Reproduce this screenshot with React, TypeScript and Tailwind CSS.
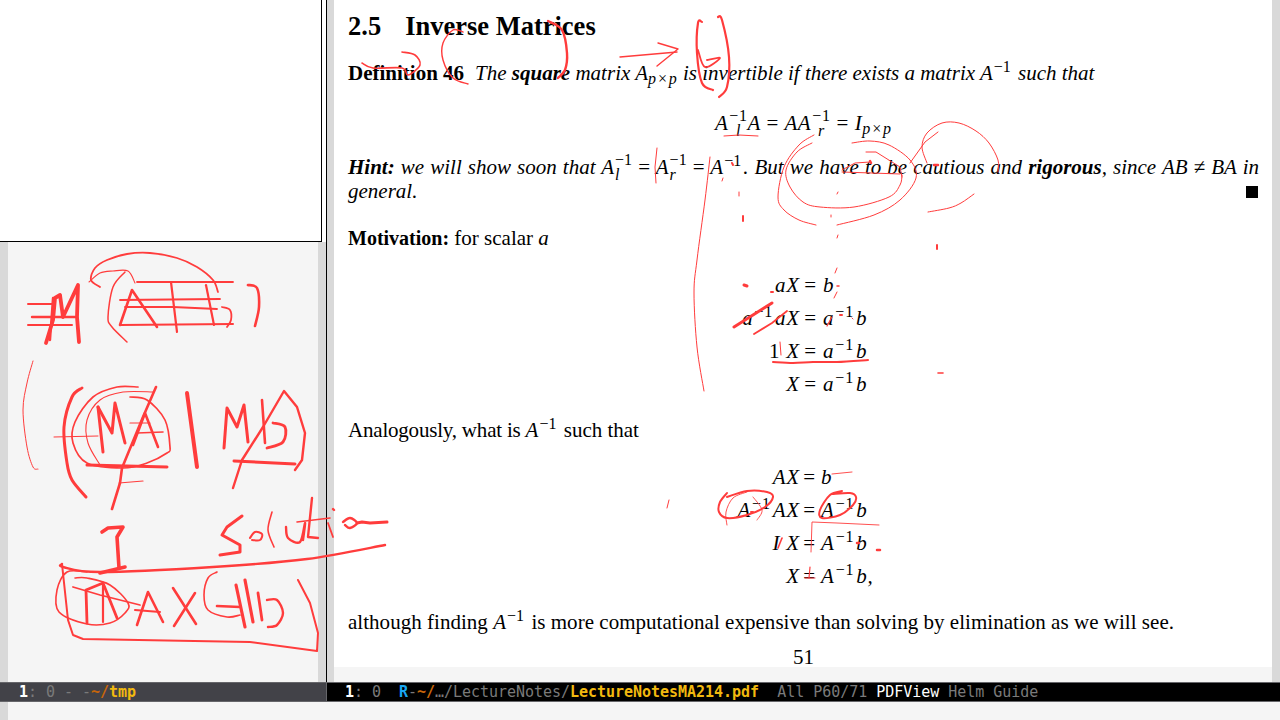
const F = "[font-family:'Liberation_Serif',serif]";
type S = [string, number, boolean?];
const strokes: S[] = [
  // left panel: #M ( A | b )
  ["100,287 91,280 95,268 107,260 127,254 150,253 177,258 197,267 213,280 218,292", 1.8, true],
  ["89,282 100,273 113,271 128,271 135,283", 1.1, true],
  ["125,272 113,287 108,317 112,327 127,342", 1.5, true],
  ["137,282 233,282", 1.8],
  ["120,300 220,299", 1.8],
  ["125,307 173,307 217,309", 1.8],
  ["120,325 233,324", 2],
  ["120,325 132,290 157,327", 2.6],
  ["171,282 177,332", 2.2],
  ["206,285 214,325", 2.2],
  ["222,307 230,310 231,320 227,327", 1.8, true],
  ["248,285 257,288 259,307 255,326", 2.6, true],
  ["28,304 55,304", 2],
  ["32,317 75,317", 2.4],
  ["28,325 72,325", 2],
  ["46,343 53,320 55,298 60,295 63,317 78,285 77,317 79,342", 3.8],
  ["50,340 53,298", 2.4],
  ["33,361 27,383 23,410 27,447 33,467 38,469", 1, true],
  // ( MA | Mb )
  ["82,388 72,397 64,427 67,463 72,480 86,497", 3, true],
  ["138,387 117,387 93,397 75,422 73,443 87,463 123,468 147,463 167,453 170,447 165,420 147,400 130,397", 1.7, true],
  ["153,392 123,392 100,400 87,420 88,443 100,465", 1.1, true],
  ["87,465 167,467", 3],
  ["98,407 103,452", 3],
  ["98,407 112,433 115,403 125,443", 3],
  ["156,387 143,417 122,468 120,483 112,509", 2.6],
  ["133,445 145,413 158,447", 2.6],
  ["130,423 150,423", 1.2],
  ["137,433 163,432", 1.6],
  ["54,437 98,436", 1],
  ["187,393 197,467", 4],
  ["224,448 227,408 237,427 244,405 248,442", 3],
  ["262,400 265,443", 2.6],
  ["267,448 283,442 285,427 273,423", 2.8, true],
  ["233,488 242,460 263,427 284,391 297,407 305,433 302,460 295,470", 2.4],
  ["234,461 295,464", 3],
  ["119,483 143,481", 1.2],
  // I and solution
  ["102,532 108,528 123,527 117,537 119,568", 3.6],
  ["100,573 125,567", 3.6],
  ["242,516 227,527 222,535 240,545 240,552 220,555", 3],
  ["250,538 255,532 262,534 260,540 252,540", 2, true],
  ["272,512 268,530 274,547", 1.6, true],
  ["286,527 288,538 300,542 305,523 303,540", 2.4, true],
  ["312,498 308,537 318,538", 2.4],
  ["297,522 330,518", 1.6],
  ["328,523 333,537", 1.8],
  ["333,509 334,510", 2.4],
  ["343,522 350,518 357,523 350,528 345,525", 2.4, true],
  ["357,523 362,522 370,523 387,522", 3],
  // underline + box
  ["62,564 63,567 100,572 213,567 307,559 385,545", 2.4, true],
  ["62,564 68,620 73,635 83,639 250,642 317,651 318,633 310,603 298,580", 2],
  ["87,572 67,572 57,590 59,612 87,624 110,623 125,613 128,603 110,585 87,578 75,578", 1.6, true],
  ["73,587 100,595 140,605", 1.8],
  ["87,623 86,590 103,583 117,618", 2.8],
  ["103,583 103,622", 2.2],
  ["137,625 148,592 163,622", 2.6],
  ["135,610 160,612", 2],
  ["173,588 196,624", 2.6],
  ["195,593 174,626", 2.6],
  ["217,572 208,578 204,595 208,610 227,617 240,615", 1.6, true],
  ["217,606 240,607", 2.6],
  ["236,585 245,627", 3.2],
  ["245,580 253,622", 3.2],
  ["258,593 262,620", 2.8],
  ["267,600 277,600 283,613 277,625 268,627", 2.4, true],
  // top of page
  ["362,63 373,68 402,68 408,75 420,65 415,55 402,52", 1.6, true],
  ["463,32 453,30 443,43 443,60 453,78 468,84", 1.4, true],
  ["548,21 562,30 567,53 565,70 558,78", 2.4, true],
  ["620,57 677,52", 1.4],
  ["658,43 678,49 657,66", 1.4],
  ["702,22 698,23 697,53 702,83 713,90", 2.2, true],
  ["718,17 722,20 729,57 727,87 719,97", 2.2, true],
  ["698,50 705,67 720,58 707,60", 1.8, true],
  ["724,136 739,135 758,136", 1],
  ["657,148 655,167 656,183", 1],
  ["710,157 705,200 697,260 694,293 697,347 704,391", 1, true],
  // circles by "But we have"
  ["814,135 799,145 784,167 778,197 784,210 799,220 816,225", 1, true],
  ["812,143 797,152 786,170 790,187 803,202 820,207 854,207 889,197 900,185 902,175", 1, true],
  ["837,225 874,215 900,200 916,178 910,160 889,145 870,141 852,143", 1, true],
  ["866,152 876,152 900,167 902,177", 1],
  ["842,170 855,163 870,162", 1],
  ["842,172 900,174", 1],
  ["910,163 925,142 938,132", 1],
  ["927,163 922,147 927,133 942,123 959,123 976,131 989,143 998,160 998,172", 1, true],
  ["928,212 949,208 961,203 974,194", 1, true],
  ["743,216 743,221", 2],
  ["739,192 739,196", 1],
  ["723,178 722,181", 1],
  ["937,245 937,249", 2],
  ["732,163 733,165", 2],
  ["870,161 871,163", 2.5],
  ["934,165 938,165", 2.5],
  ["838,192 837,194", 1],
  ["831,215 831,217", 1],
  ["838,235 837,238", 1],
  // a^{-1}
  ["744,285 747,286", 3],
  ["771,292 773,292", 2],
  ["837,286 839,286", 1.5],
  ["837,268 835,273", 1],
  ["837,292 834,298", 1],
  ["734,327 772,303", 3],
  ["754,334 772,323 787,311", 1.8],
  ["827,326 832,317", 1.2],
  ["840,315 842,315", 2],
  ["852,318 853,319", 1],
  ["780,342 781,355", 1],
  ["773,362 793,363 813,362 837,362 868,360", 2, true],
  ["938,373 943,373", 1.6],
  // A^{-1}
  ["832,474 852,472", 0.9],
  ["667,508 669,500", 1],
  ["727,493 720,502 719,512 727,518 747,515 765,507 773,497 767,492 747,491 727,497", 2, true],
  ["727,525 726,512 733,498 747,492", 0.9, true],
  ["757,520 762,510 753,497", 0.9, true],
  ["842,491 830,495 820,510 822,518 840,515 853,505 856,497 850,493 832,494", 2, true],
  ["811,552 812,522 837,523 879,525", 0.9],
  ["778,548 782,538", 1.6],
  ["857,543 859,543", 2.5],
  ["877,550 880,550", 2.5],
  ["810,567 809,578", 1.2],
  ["805,578 815,578", 1],
  ["751,512 753,512", 2],
];

function strokePath(p: string, smooth?: boolean) {
  const pts = p.split(" ").map((q) => q.split(",").map(Number));
  if (!smooth) return "M" + pts.map((q) => q.join(" ")).join("L");
  let d = `M${pts[0][0]} ${pts[0][1]}`;
  for (let i = 0; i < pts.length - 1; i++) {
    const a = pts[Math.max(i - 1, 0)];
    const b = pts[i];
    const c = pts[i + 1];
    const e = pts[Math.min(i + 2, pts.length - 1)];
    d += `C${b[0] + (c[0] - a[0]) / 6} ${b[1] + (c[1] - a[1]) / 6} ${c[0] - (e[0] - b[0]) / 6} ${c[1] - (e[1] - b[1]) / 6} ${c[0]} ${c[1]}`;
  }
  return d;
}

function Sup({ t = "−1" }: { t?: string }) {
  return <sup className="ml-[1px] mr-[2px] not-italic text-[16px]">{t}</sup>;
}

function SubSup({ s }: { s: string }) {
  return (
    <span className="ml-[1px] inline-flex flex-col align-[9px] text-[16px] leading-[15px]">
      <span className="not-italic">−1</span>
      <span>{s}</span>
    </span>
  );
}

function Sub({ t }: { t: string }) {
  return <sub className="text-[16px] tracking-[1px]">{t}</sub>;
}

function Eq({ l, r, lhs = "grid-cols-[452px_21px_1fr]" }: { l: React.ReactNode; r: React.ReactNode; lhs?: string }) {
  return (
    <div className={`grid h-[26px] ${lhs} whitespace-nowrap leading-[26px] italic tracking-[0.8px]`}>
      <div className="text-right">{l}</div>
      <div className="text-center not-italic">=</div>
      <div className="pl-[2px]">{r}</div>
    </div>
  );
}

function Mode({ dark }: { dark?: boolean }) {
  const g = "text-[#7a7a7a]";
  const y = "font-bold text-[#f2b90f]";
  const o = "font-bold text-[#c8660a]";
  const w = "font-bold text-white";
  if (!dark)
    return (
      <div className="flex h-[20px] w-[327px] items-center overflow-hidden whitespace-pre border-y border-r border-[#66666a] bg-[#424248] pl-[1px] font-['DejaVu_Sans_Mono',monospace] text-[15px] leading-[18px] tracking-[-0.03px]">
        <span className={w}>{"  1"}</span>
        <span className={g}>: 0 - -</span>
        <span className={o}>~/</span>
        <span className={y}>tmp</span>
      </div>
    );
  return (
    <div className="flex h-[20px] flex-1 items-center overflow-hidden whitespace-pre border-y border-[#66666a] bg-black font-['DejaVu_Sans_Mono',monospace] text-[15px] leading-[18px] tracking-[-0.03px]">
      <span className={w}>{"  1"}</span>
      <span className={g}>: 0  </span>
      <span className="font-bold text-[#19a6f2]">R</span>
      <span className={g}>-</span>
      <span className={o}>~/</span>
      <span className={g}>…/LectureNotes/</span>
      <span className={y}>LectureNotesMA214.pdf</span>
      <span className={g}>  All P60/71 </span>
      <span className="text-white">PDFView</span>
      <span className={g}> Helm Guide</span>
    </div>
  );
}

const C2 = "grid-cols-[452px_19px_1fr]";

export default function App() {
  return (
    <div className={`relative flex h-[720px] w-[1280px] flex-col overflow-hidden bg-[#f5f5f5] text-black ${F} text-[21px]`}>
      <div className="flex h-[682px]">
        {/* left window */}
        <div className="flex w-[326px] flex-col">
          <div className="flex h-[242px]">
            <div className="h-[241.5px] w-[322px] border-r border-b border-black bg-white" />
            <div className="w-[4px] bg-white" />
          </div>
          <div className="flex flex-1">
            <div className="w-[8px] bg-[#d9d9d9]" />
            <div className="flex-1 bg-[#f5f5f5]" />
            <div className="w-[8px] bg-[#d9d9d9]" />
          </div>
        </div>
        <div className="w-[1px] bg-black" />
        {/* right window */}
        <div className="flex flex-1">
          <div className="w-[7px] bg-[#d9d9d9]" />
          <div className="flex flex-1 flex-col">
            <div className="flex h-[667px] flex-col bg-white pr-[13px] pl-[14px] pt-[13px]">
              <div className="h-[26px] whitespace-pre text-[26.5px] font-bold leading-[26px]">
                2.5<span className="ml-[24px]">Inverse Matrices</span>
              </div>
              <div className="mt-[21px] h-[26px] whitespace-nowrap leading-[26px]">
                <b>Definition 46</b>
                <span className="ml-[11px] italic">
                  The <b>square</b> matrix A<Sub t="p×p" /> is invertible if there exists a matrix A<Sup /> such that
                </span>
              </div>
              <div className="mt-[22px] h-[26px] whitespace-nowrap text-center italic leading-[26px] tracking-[0.6px]">
                A<SubSup s="l" />A <span className="not-italic">=</span> AA<SubSup s="r" /> <span className="not-italic">=</span> I<Sub t="p×p" />
              </div>
              <div className="mt-[18px] h-[26px] whitespace-nowrap italic leading-[26px] [text-align-last:justify]">
                <b>Hint:</b> we will show soon that A<SubSup s="l" /> <span className="not-italic">=</span> A<SubSup s="r" /> <span className="not-italic">=</span> A<Sup />. But we have to be cautious and <b>rigorous</b>, since AB <span className="not-italic">≠</span> BA in
              </div>
              <div className="flex h-[26px] items-center justify-between italic leading-[26px]">
                <span>general.</span>
                <span className="mt-[2px] mr-[1px] h-[12px] w-[12px] bg-black" />
              </div>
              <div className="mt-[21px] h-[26px] leading-[26px]">
                <b className="text-[20px]">Motivation:</b> for scalar <i>a</i>
              </div>
              <div className="mt-[21px] flex flex-col gap-[7px]">
                <Eq l="aX" r="b" />
                <Eq l={<>a<Sup />aX</>} r={<>a<Sup />b</>} />
                <Eq l={<><span className="not-italic">1</span> X</>} r={<>a<Sup />b</>} />
                <Eq l="X" r={<>a<Sup />b</>} />
              </div>
              <div className="mt-[20px] h-[26px] leading-[26px]">
                <span className="tracking-[-0.2px]">Analogously, what is </span><i>A</i><Sup /> such that
              </div>
              <div className="mt-[21px] flex flex-col gap-[7px]">
                <Eq lhs={C2} l="AX" r="b" />
                <Eq lhs={C2} l={<>A<Sup />AX</>} r={<>A<Sup />b</>} />
                <Eq lhs={C2} l="I X" r={<>A<Sup />b</>} />
                <Eq lhs={C2} l="X" r={<>A<Sup />b,</>} />
              </div>
              <div className="mt-[20px] h-[26px] whitespace-nowrap leading-[26px] tracking-[0.03px]">
                although finding <i>A</i><Sup /> is more computational expensive than solving by elimination as we will see.
              </div>
              <div className="mt-[9px] h-[26px] text-center leading-[26px]">51</div>
            </div>
            <div className="flex-1 bg-[#f5f5f5]" />
          </div>
          <div className="w-[8px] bg-[#d9d9d9]" />
        </div>
      </div>
      <div className="flex">
        <Mode />
        <Mode dark />
      </div>
      <div className="flex flex-1">
        <div className="w-[8px] bg-[#d9d9d9]" />
      </div>
      {/* handwritten annotations */}
      <svg className="pointer-events-none absolute inset-0" width={1280} height={720} fill="none" stroke="#ff3c3c" strokeLinecap="round" strokeLinejoin="round">
        {strokes.map(([p, w, s], i) => (
          <path key={i} d={strokePath(p, s)} strokeWidth={w} />
        ))}
      </svg>
    </div>
  );
}
